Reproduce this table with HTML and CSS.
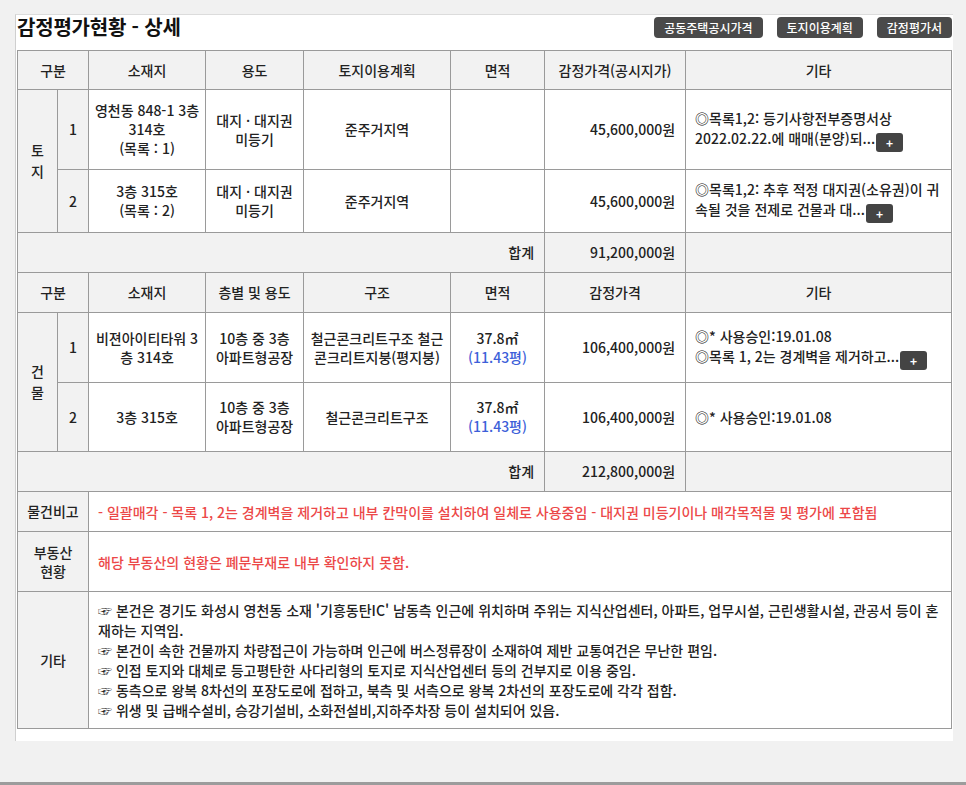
FILE: index.html
```html
<!DOCTYPE html>
<html lang="ko">
<head>
<meta charset="utf-8">
<title>감정평가현황 - 상세</title>
<link rel="stylesheet" href="styles.css">
</head>
<body>
<div class="frame">
  <div class="panel">
    <div class="head">
      <h1 class="title">감정평가현황 - 상세</h1>
      <div class="btns">
        <span class="btn">공동주택공시가격</span>
        <span class="btn">토지이용계획</span>
        <span class="btn">감정평가서</span>
      </div>
    </div>
    <table class="grid">
      <colgroup>
        <col class="c1"><col class="c2"><col class="c3"><col class="c4"><col class="c5"><col class="c6"><col class="c7"><col class="c8">
      </colgroup>
      <tr class="r-head">
        <th colspan="2">구분</th>
        <th>소재지</th>
        <th>용도</th>
        <th>토지이용계획</th>
        <th>면적</th>
        <th>감정가격(공시지가)</th>
        <th>기타</th>
      </tr>
      <tr class="r-80">
        <td rowspan="2" class="lab kind">토<br>지</td>
        <td class="lab">1</td>
        <td>영천동 848-1 3층 314호<br>(목록 : 1)</td>
        <td class="keep">대지 · 대지권 미등기</td>
        <td>준주거지역</td>
        <td></td>
        <td class="num">45,600,000원</td>
        <td class="etc">◎목록1,2: 등기사항전부증명서상 2022.02.22.에 매매(분양)되...<span class="plus">+</span></td>
      </tr>
      <tr class="r-63">
        <td class="lab">2</td>
        <td>3층 315호<br>(목록 : 2)</td>
        <td class="keep">대지 · 대지권 미등기</td>
        <td>준주거지역</td>
        <td></td>
        <td class="num">45,600,000원</td>
        <td class="etc">◎목록1,2: 추후 적정 대지권(소유권)이 귀속될 것을 전제로 건물과 대...<span class="plus">+</span></td>
      </tr>
      <tr class="r-40 sum">
        <td colspan="6" class="num">합계</td>
        <td class="num">91,200,000원</td>
        <td></td>
      </tr>
      <tr class="r-40 r-head">
        <th colspan="2">구분</th>
        <th>소재지</th>
        <th>층별 및 용도</th>
        <th>구조</th>
        <th>면적</th>
        <th>감정가격</th>
        <th>기타</th>
      </tr>
      <tr class="r-70">
        <td rowspan="2" class="lab kind">건<br>물</td>
        <td class="lab">1</td>
        <td>비젼아이티타워 3층 314호</td>
        <td class="keep">10층 중 3층 아파트형공장</td>
        <td>철근콘크리트구조 철근콘크리트지붕(평지붕)</td>
        <td>37.8㎡<br><span class="py">(11.43평)</span></td>
        <td class="num">106,400,000원</td>
        <td class="etc">◎* 사용승인:19.01.08<br>◎목록 1, 2는 경계벽을 제거하고...<span class="plus">+</span></td>
      </tr>
      <tr class="r-69">
        <td class="lab">2</td>
        <td>3층 315호</td>
        <td class="keep">10층 중 3층 아파트형공장</td>
        <td>철근콘크리트구조</td>
        <td>37.8㎡<br><span class="py">(11.43평)</span></td>
        <td class="num">106,400,000원</td>
        <td class="etc">◎* 사용승인:19.01.08</td>
      </tr>
      <tr class="r-40 sum">
        <td colspan="6" class="num">합계</td>
        <td class="num">212,800,000원</td>
        <td></td>
      </tr>
      <tr class="r-40">
        <td colspan="2" class="lab">물건비고</td>
        <td colspan="6" class="note red">- 일괄매각 - 목록 1, 2는 경계벽을 제거하고 내부 칸막이를 설치하여 일체로 사용중임 - 대지권 미등기이나 매각목적물 및 평가에 포함됨</td>
      </tr>
      <tr class="r-60">
        <td colspan="2" class="lab">부동산<br>현황</td>
        <td colspan="6" class="note red">해당 부동산의 현황은 폐문부재로 내부 확인하지 못함.</td>
      </tr>
      <tr class="r-137">
        <td colspan="2" class="lab">기타</td>
        <td colspan="6" class="note">☞ 본건은 경기도 화성시 영천동 소재 '기흥동탄IC' 남동측 인근에 위치하며 주위는 지식산업센터, 아파트, 업무시설, 근린생활시설, 관공서 등이 혼<br>재하는 지역임.<br>☞ 본건이 속한 건물까지 차량접근이 가능하며 인근에 버스정류장이 소재하여 제반 교통여건은 무난한 편임.<br>☞ 인접 토지와 대체로 등고평탄한 사다리형의 토지로 지식산업센터 등의 건부지로 이용 중임.<br>☞ 동측으로 왕복 8차선의 포장도로에 접하고, 북측 및 서측으로 왕복 2차선의 포장도로에 각각 접함.<br>☞ 위생 및 급배수설비, 승강기설비, 소화전설비,지하주차장 등이 설치되어 있음.</td>
      </tr>
    </table>
  </div>
</div>
</body>
</html>
```

FILE: styles.css
```css
html, body {
  margin: 0;
  padding: 0;
}
body {
  background: #f1f1f1;
  font-family: "Noto Sans CJK KR", "Noto Sans", sans-serif;
  color: #222;
}
.frame {
  height: 785px;
  box-sizing: border-box;
  padding: 14px 13px 0 15px;
  border-bottom: 3px solid #9c9c9c;
}
.panel {
  background: #fff;
  border-left: 1px solid #cfcfcf;
  border-top: 1px solid #dcdcdc;
  padding: 0 1px 12px 1px;
}
.head {
  display: flex;
  justify-content: space-between;
  align-items: flex-start;
  height: 35px;
  box-sizing: border-box;
  padding-top: 1px;
}
.title {
  margin: 0;
  font-size: 20px;
  line-height: 22px;
  font-weight: 700;
  color: #111;
  letter-spacing: -0.2px;
}
.btns {
  display: flex;
  gap: 14px;
  padding-top: 1px;
}
.btn {
  display: block;
  height: 21px;
  line-height: 21px;
  padding: 0 10px;
  background: #4a4a4a;
  color: #fff;
  font-size: 12px;
  font-weight: 500;
  border-radius: 4px;
}
.grid {
  width: 934px;
  table-layout: fixed;
  border-collapse: collapse;
  font-size: 14px;
  line-height: 19px;
  font-weight: 500;
}
.c1 { width: 40px; }
.c2 { width: 31px; }
.c3 { width: 117px; }
.c4 { width: 98px; }
.c5 { width: 147px; }
.c6 { width: 94px; }
.c7 { width: 141px; }
.c8 { width: 266px; }
.grid th, .grid td {
  border: 1px solid #9a9a9a;
  padding: 0 4px;
  text-align: center;
  vertical-align: middle;
  font-weight: 500;
}
.grid th {
  background: #f2f2f2;
  color: #222;
}
.r-head { height: 39px; }
.r-80 { height: 80px; }
.r-63 { height: 63px; }
.r-40 { height: 40px; }
.r-70 { height: 70px; }
.r-69 { height: 69px; }
.r-60 { height: 60px; }
.r-137 { height: 137px; }
.grid td.lab {
  background: #f2f2f2;
}
.grid td.kind {
  line-height: 21px;
}
.grid td.keep {
  word-break: keep-all;
}
.grid td.num {
  text-align: right;
  padding-right: 10px;
}
.sum td {
  background: #f2f2f2;
}
.grid td.etc {
  text-align: left;
  padding-left: 9px;
  padding-right: 6px;
  line-height: 20px;
}
.grid td.note {
  text-align: left;
  padding-left: 9px;
  line-height: 20px;
}
.red {
  color: #ec4848;
}
.py {
  color: #3d5fd9;
}
.plus {
  display: inline-block;
  width: 27px;
  height: 19px;
  line-height: 19px;
  margin-left: 1px;
  background: #444;
  color: #fff;
  border-radius: 3px;
  text-align: center;
  font-size: 12px;
  font-weight: 700;
  vertical-align: -4px;
}
```
